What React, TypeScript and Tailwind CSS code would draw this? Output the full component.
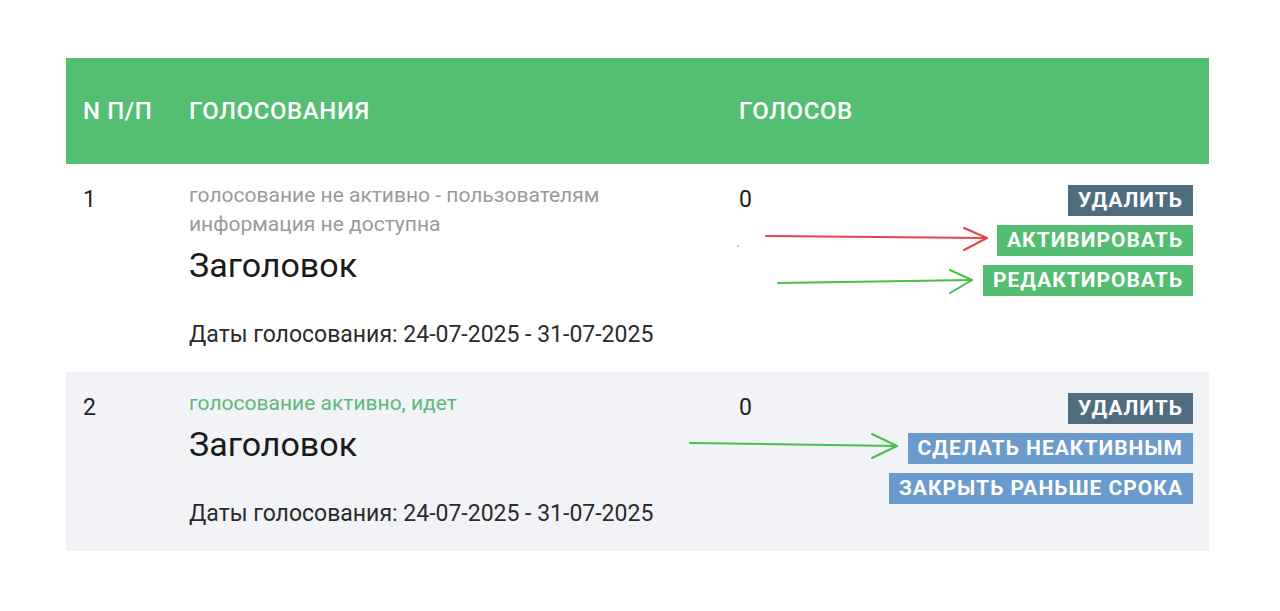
const font = { fontFamily: 'Roboto, "Noto Sans", sans-serif' }

type Btn = { label: string; color: string }

function Row({
  n,
  status,
  statusClass,
  buttons,
  className,
}: {
  n: number
  status: string
  statusClass: string
  buttons: Btn[]
  className: string
}) {
  return (
    <div className={`grid grid-cols-[123px_550px_1fr] ${className}`}>
      <div className="pl-[17px] pt-[21px] text-[23px] leading-[30px] text-[#222]">{n}</div>
      <div className="pt-[17px] pb-[22px] pr-[20px]">
        <div className={`max-w-[470px] text-[21px] leading-[29px] ${statusClass}`}>{status}</div>
        <div className="mt-[6px] text-[34px] leading-[40px] text-[#1a1a1a]">Заголовок</div>
        <div className="mt-[35px] text-[23px] leading-[30px] text-[#2b2b2b]">
          Даты голосования: 24-07-2025 - 31-07-2025
        </div>
      </div>
      <div className="flex justify-between pt-[21px] pr-[16px]">
        <div className="text-[23px] leading-[30px] text-[#222]">0</div>
        <div className="flex flex-col items-end gap-[9px]">
          {buttons.map((b) => (
            <button
              key={b.label}
              className={`h-[31px] px-[10px] text-[21px] font-bold leading-[31px] tracking-[1px] text-white ${b.color}`}
            >
              {b.label}
            </button>
          ))}
        </div>
      </div>
    </div>
  )
}

export default function App() {
  return (
    <div className="relative min-h-[611px] bg-white pt-[58px]" style={font}>
      <div className="ml-[66px] w-[1143px]">
        <div className="grid h-[106px] grid-cols-[123px_550px_1fr] items-center bg-[#54bf73] text-[24px] font-medium tracking-[0.6px] text-white">
          <div className="pl-[17px]">N П/П</div>
          <div>ГОЛОСОВАНИЯ</div>
          <div>ГОЛОСОВ</div>
        </div>

        <Row
          n={1}
          status="голосование не активно - пользователям информация не доступна"
          statusClass="text-[#9a9a9a]"
          className="bg-white"
          buttons={[
            { label: 'УДАЛИТЬ', color: 'bg-[#4f6d80]' },
            { label: 'АКТИВИРОВАТЬ', color: 'bg-[#53bd71]' },
            { label: 'РЕДАКТИРОВАТЬ', color: 'bg-[#53bd71]' },
          ]}
        />

        <Row
          n={2}
          status="голосование активно, идет"
          statusClass="text-[#5cb97a]"
          className="bg-[#f1f3f7]"
          buttons={[
            { label: 'УДАЛИТЬ', color: 'bg-[#4f6d80]' },
            { label: 'СДЕЛАТЬ НЕАКТИВНЫМ', color: 'bg-[#6b9bcd]' },
            { label: 'ЗАКРЫТЬ РАНЬШЕ СРОКА', color: 'bg-[#6b9bcd]' },
          ]}
        />
      </div>

      {/* hand-drawn annotation arrows */}
      <svg
        className="pointer-events-none absolute left-0 top-0"
        width="1280"
        height="611"
        viewBox="0 0 1280 611"
        fill="none"
        strokeLinecap="round"
        strokeLinejoin="round"
      >
        <g stroke="#e0474c" strokeWidth="2">
          <path d="M766 236 L987 238" />
          <path d="M964 228 L987 238 L964 250" />
        </g>
        <circle cx="738" cy="246" r="0.8" fill="#e0474c" />
        <g stroke="#47c04a" strokeWidth="2">
          <path d="M778 283 L972 280" />
          <path d="M950 270 L972 280 L950 293" />
          <path d="M690 443 L897 446" />
          <path d="M872 434 L897 446 L872 458" />
        </g>
      </svg>
    </div>
  )
}
